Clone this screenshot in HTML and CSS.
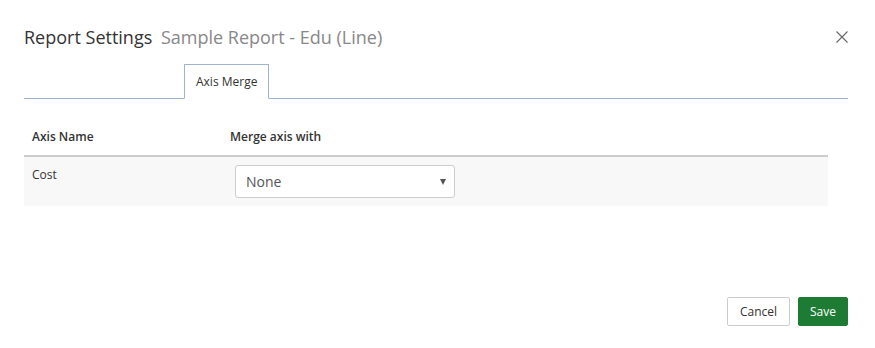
FILE: index.html
```html
<!DOCTYPE html>
<html lang="en">
<head>
  <meta charset="UTF-8">
  <title>Report Settings</title>
  <link rel="stylesheet" href="styles.css">
</head>
<body>
  <div class="modal">
    <!-- header -->
    <div class="modal-header">
      <h4 class="modal-title">Report Settings <span class="subtitle">Sample Report - Edu (Line)</span></h4>
      <button class="close" aria-label="Close">
        <svg width="12" height="12" viewBox="0 0 12 12">
          <path d="M0.5 0.5 L11.5 11.5 M11.5 0.5 L0.5 11.5" stroke="#666" stroke-width="1.1" fill="none"/>
        </svg>
      </button>
    </div>

    <!-- tabs -->
    <ul class="tabs">
      <li class="tab active">Axis Merge</li>
    </ul>

    <!-- axis table -->
    <table class="grid">
      <colgroup>
        <col class="col-name">
        <col>
      </colgroup>
      <thead>
        <tr>
          <th>Axis Name</th>
          <th>Merge axis with</th>
        </tr>
      </thead>
      <tbody>
        <tr>
          <td class="cell-name">Cost</td>
          <td class="cell-merge">
            <div class="select">
              <span>None</span>
              <span class="caret"></span>
            </div>
          </td>
        </tr>
      </tbody>
    </table>

    <!-- footer -->
    <div class="modal-footer">
      <button class="btn btn-default">Cancel</button>
      <button class="btn btn-success">Save</button>
    </div>
  </div>
</body>
</html>
```

FILE: styles.css
```css
html, body {
  margin: 0;
  padding: 0;
  background: #fff;
  font-family: 'Open Sans', sans-serif;
  color: #333;
}

.modal {
  padding: 0 27px 0 24px;
}

.modal-header {
  display: flex;
  justify-content: space-between;
  align-items: center;
  height: 64px;
  padding-top: 10px;
  box-sizing: border-box;
}

.modal-title {
  margin: 0;
  font-size: 18px;
  font-weight: normal;
  color: #333;
}

.subtitle {
  color: #888;
  margin-left: 4px;
}

.close {
  border: 0;
  background: none;
  padding: 0;
  width: 12px;
  height: 12px;
  display: flex;
  cursor: pointer;
}

.tabs {
  list-style: none;
  margin: 0;
  padding: 0 0 0 160px;
  display: flex;
  border-bottom: 1px solid #9db4d2;
  height: 35px;
  box-sizing: border-box;
}

.tab {
  font-size: 12px;
  color: #333;
  padding: 0 11px;
  line-height: 33px;
  margin-bottom: -1px;
  border: 1px solid transparent;
}

.tab.active {
  border-color: #9db4d2;
  border-bottom-color: #fff;
  background: #fff;
}

.grid {
  width: 804px;
  margin-top: 18px;
  border-collapse: collapse;
  table-layout: fixed;
  font-size: 12px;
}

.grid .col-name {
  width: 206px;
}

.grid th {
  text-align: left;
  font-weight: 600;
  color: #333;
  height: 38px;
  padding: 0 8px;
  border-bottom: 2px solid #ccc;
  vertical-align: middle;
}

.grid th + th {
  padding-left: 0;
}

.grid td {
  background: #f8f8f8;
  height: 50px;
  box-sizing: border-box;
  padding: 0 8px;
  vertical-align: top;
}

.grid td.cell-name {
  padding-top: 9px;
}

.grid td.cell-merge {
  padding-top: 8px;
  padding-left: 5px;
}

.select {
  width: 220px;
  height: 33px;
  box-sizing: border-box;
  border: 1px solid #ccc;
  border-radius: 3px;
  background: #fff;
  display: flex;
  justify-content: space-between;
  align-items: center;
  padding: 0 8px 0 10px;
  font-size: 14px;
  color: #555;
}

.caret {
  width: 0;
  height: 0;
  border-left: 3px solid transparent;
  border-right: 3px solid transparent;
  border-top: 6px solid #555;
}

.modal-footer {
  display: flex;
  justify-content: flex-end;
  gap: 8px;
  margin-top: 91px;
}

.btn {
  font-family: 'Open Sans', sans-serif;
  font-size: 12px;
  height: 29px;
  padding: 0 12px;
  border-radius: 2px;
  cursor: pointer;
}

.btn-default {
  background: #fff;
  color: #333;
  border: 1px solid #ccc;
}

.btn-success {
  background: #1e7b34;
  color: #fff;
  border: 1px solid #1e7b34;
  padding: 0 11px;
}
```
